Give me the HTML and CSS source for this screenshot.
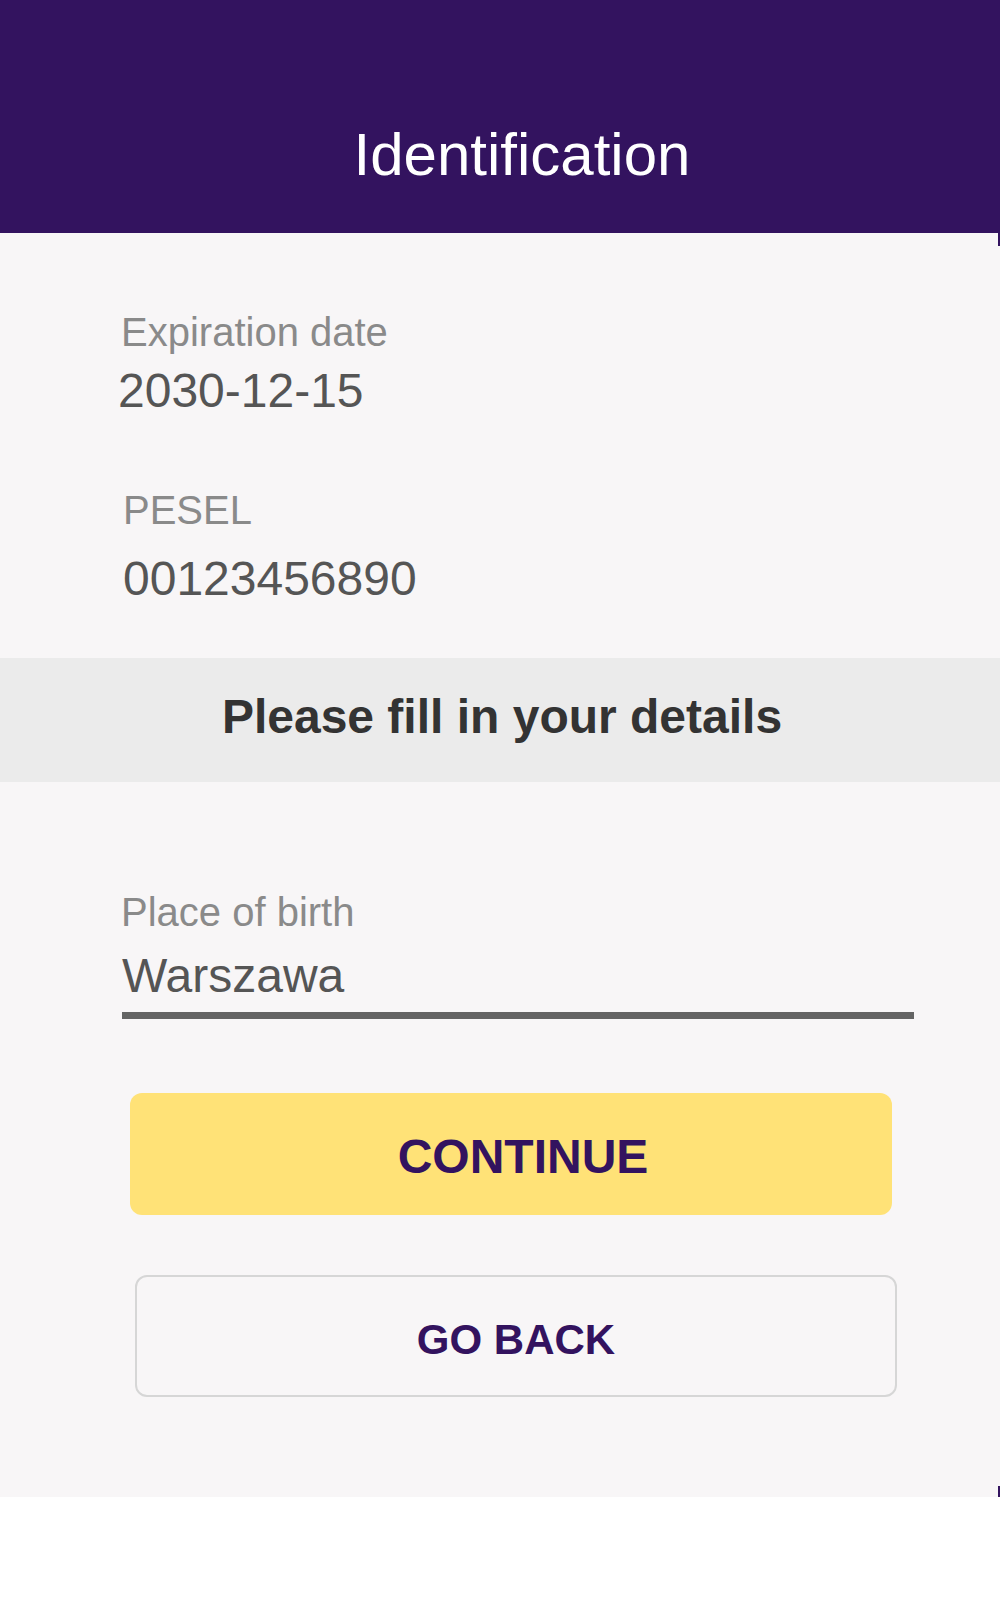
FILE: index.html
```html
<!DOCTYPE html>
<html lang="en">
<head>
<meta charset="utf-8">
<title>Identification</title>
<link rel="stylesheet" href="styles.css">
</head>
<body>
<div class="screen">
  <header class="topbar">
    <h1 class="title">Identification</h1>
  </header>
  <main class="content">
    <section class="info">
      <div class="field field-exp">
        <div class="label">Expiration date</div>
        <div class="value">2030-12-15</div>
      </div>
      <div class="field field-pesel">
        <div class="label">PESEL</div>
        <div class="value">00123456890</div>
      </div>
    </section>
    <div class="band">Please fill in your details</div>
    <section class="form">
      <div class="label label-birth">Place of birth</div>
      <div class="input">Warszawa</div>
      <div class="actions">
        <button class="btn btn-primary" type="button">CONTINUE</button>
        <button class="btn btn-secondary" type="button">GO BACK</button>
      </div>
    </section>
    <span class="edge edge-top"></span>
    <span class="edge edge-bottom"></span>
  </main>
</div>
</body>
</html>
```

FILE: styles.css
```css
html, body {
  margin: 0;
  padding: 0;
  background: #ffffff;
}

body {
  font-family: "Liberation Sans", Arial, sans-serif;
}

.screen {
  width: 1000px;
}

.topbar {
  box-sizing: border-box;
  height: 233px;
  background: #33135f;
  padding: 125px 0 0 44px;
}

.title {
  margin: 0;
  font-size: 60px;
  line-height: 60px;
  font-weight: normal;
  color: #ffffff;
  text-align: center;
}

.content {
  position: relative;
  background: #f8f6f7;
  padding-bottom: 100px;
}

.info {
  padding-top: 75px;
  padding-bottom: 51px;
}

.field-exp {
  padding-left: 121px;
}

.field-pesel {
  padding-left: 123px;
  margin-top: 67px;
}

.label {
  font-size: 40px;
  line-height: 48px;
  color: #8a8a8a;
}

.value {
  font-size: 48px;
  line-height: 56px;
  color: #555555;
}

.field-exp .value {
  margin-top: 7px;
  margin-left: -3px;
}

.field-pesel .value {
  margin-top: 17px;
}

.band {
  box-sizing: border-box;
  height: 124px;
  padding: 31px 0 37px 4px;
  background: #ebebeb;
  color: #333333;
  font-size: 48px;
  line-height: 56px;
  font-weight: bold;
  text-align: center;
}

.form {
  padding-top: 106px;
  display: flex;
  flex-direction: column;
}

.label-birth {
  padding-left: 121px;
}

.input {
  margin: 12px 0 0 122px;
  width: 792px;
  font-size: 48px;
  line-height: 56px;
  color: #555555;
  padding-bottom: 8px;
  border-bottom: 7px solid #646464;
}

.actions {
  display: flex;
  flex-direction: column;
  gap: 60px;
  margin-top: 74px;
}

.btn {
  box-sizing: border-box;
  width: 762px;
  height: 122px;
  border-radius: 12px;
  font-family: "Liberation Sans", Arial, sans-serif;
  font-weight: bold;
  color: #33135f;
  cursor: pointer;
  text-align: center;
  margin: 0;
}

.btn-primary {
  margin-left: 130px;
  background: #ffe277;
  border: none;
  font-size: 48px;
  line-height: 117px;
  padding: 5px 0 0 24px;
}

.btn-secondary {
  margin-left: 135px;
  background: #f8f6f7;
  border: 2px solid #d6d6d6;
  font-size: 42px;
  line-height: 111px;
  padding: 7px 0 0 0;
}

.edge {
  position: absolute;
  right: 0;
  width: 2px;
  background: #33135f;
}

.edge-top {
  top: 0;
  height: 13px;
}

.edge-bottom {
  bottom: 0;
  height: 11px;
}
```
